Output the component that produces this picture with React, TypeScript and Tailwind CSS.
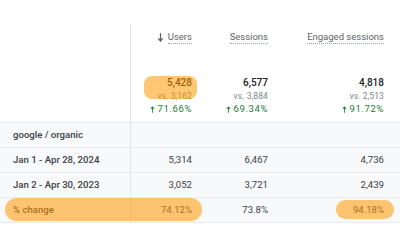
const COLS = "grid grid-cols-[131px_61px_76px_116px_1fr]";

const METRICS = [
  { name: "Users", total: "5,428", prev: "3,162", pct: "71.66%", sorted: true },
  { name: "Sessions", total: "6,577", prev: "3,884", pct: "69.34%" },
  { name: "Engaged sessions", total: "4,818", prev: "2,513", pct: "91.72%" },
];

const ROWS = [
  { label: "google / organic", values: ["", "", ""] },
  { label: "Jan 1 - Apr 28, 2024", values: ["5,314", "6,467", "4,736"] },
  { label: "Jan 2 - Apr 30, 2023", values: ["3,052", "3,721", "2,439"] },
  { label: "% change", values: ["74.12%", "73.8%", "94.18%"] },
];

function ArrowIcon({ up, className }: { up?: boolean; className?: string }) {
  return (
    <svg width="7" height="9" viewBox="0 0 7 9" className={className} fill="currentColor">
      {up ? (
        <path d="M3.5 0 L6.5 3.4 L4.1 3.4 L4.1 9 L2.9 9 L2.9 3.4 L0.5 3.4 Z" />
      ) : (
        <path d="M3.5 9 L6.5 5.6 L4.1 5.6 L4.1 0 L2.9 0 L2.9 5.6 L0.5 5.6 Z" />
      )}
    </svg>
  );
}

export default function App() {
  return (
    <div className="relative w-[400px] h-[250px] bg-white overflow-hidden font-['Roboto',sans-serif] text-[#3c4043]">
      {/* Header with totals */}
      <div className={`${COLS} pt-[24px]`}>
        <div className="h-[98px] border-r border-[#e3e5e8]" />
        {METRICS.map((m) => (
          <div key={m.name} className="h-[98px] flex flex-col items-end">
            <div className="pt-[7px] flex items-center gap-[4px] text-[9.5px] leading-[12px] text-[#5f6368]">
              {m.sorted && <ArrowIcon className="text-[#5f6368]" />}
              <span className="border-b border-dotted border-[#9aa0a6]">{m.name}</span>
            </div>
            <div className="mt-[33px] text-[10px] leading-[12px] font-medium text-[#202124]">{m.total}</div>
            <div className="text-[8.5px] leading-[14px] text-[#80868b] tracking-[0.1px]">vs. {m.prev}</div>
            <div className="flex items-center gap-[3px] text-[9.5px] leading-[12px] text-[#188038] tracking-[0.6px]">
              <ArrowIcon up className="w-[5px] h-[7px]" />
              <span>{m.pct}</span>
            </div>
          </div>
        ))}
        <div />
      </div>

      {/* Body rows */}
      <div className="border-t border-[#e8eaed]">
        {ROWS.map((r) => (
          <div key={r.label} className={`${COLS} h-[25px] bg-[#f8f9fb] border-b border-[#e8eaed] items-center`}>
            <div className="h-full flex items-center pl-[13px] border-r border-[#e3e5e8] text-[9.6px] font-medium text-[#3c4043]">
              {r.label}
            </div>
            {r.values.map((v, i) => (
              <div key={i} className="text-right text-[9.6px] text-[#3c4043]">
                {v}
              </div>
            ))}
            <div />
          </div>
        ))}
      </div>

      {/* Highlight overlays */}
      <div className="absolute left-[144px] top-[76px] w-[53px] h-[23px] rounded-[8px] bg-[#ff9800]/55" />
      <div className="absolute left-[5px] top-[198px] w-[197px] h-[23px] rounded-full bg-[#ff9800]/55" />
      <div className="absolute left-[336px] top-[200px] w-[58px] h-[19px] rounded-full bg-[#ff9800]/55" />
    </div>
  );
}
